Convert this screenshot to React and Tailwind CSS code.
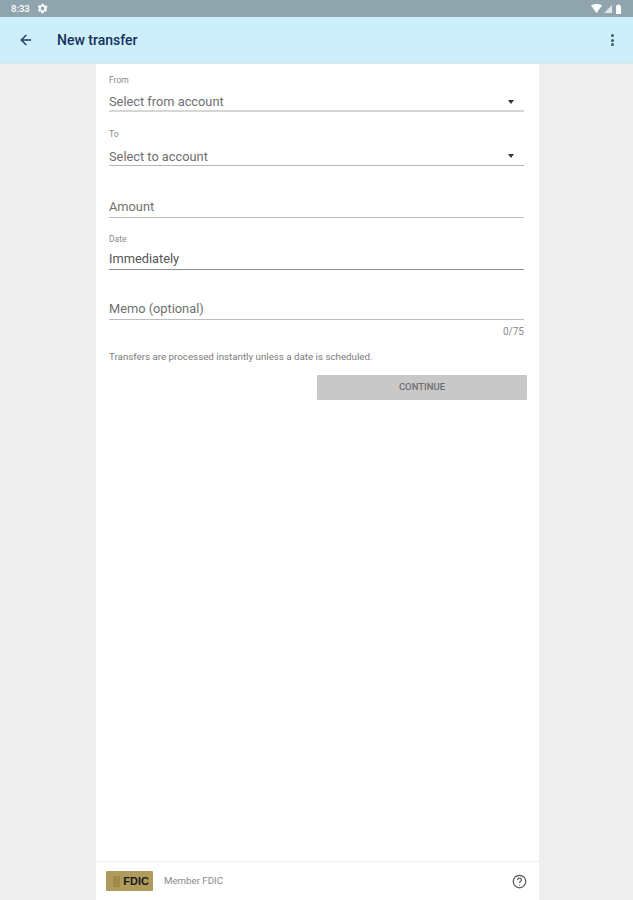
import { ArrowLeft } from 'lucide-react';

const font = { fontFamily: 'Roboto, sans-serif' };

function StatusBar() {
    return (
        <div className="flex h-[17px] items-center justify-between bg-[#90a4ae] pl-[11px] pr-[10px]">
            <div className="flex items-center gap-[6px]">
                <span className="text-[9.500px] leading-none font-medium text-white">8:33</span>
                <svg width="13" height="13" viewBox="0 0 24 24" fill="#fff">
                    <path d="M19.400 13a7.600 7.600 0 0 0 0-2l2.100-1.600-2-3.500-2.500 1a7.500 7.500 0 0 0-1.700-1L14 3.300h-4l-.4 2.600a7.500 7.500 0 0 0-1.700 1l-2.500-1-2 3.500L5.500 11a7.600 7.600 0 0 0 0 2l-2.100 1.600 2 3.500 2.500-1a7.500 7.500 0 0 0 1.700 1l.4 2.600h4l.4-2.600a7.500 7.500 0 0 0 1.700-1l2.500 1 2-3.500zM12 15.500a3.500 3.500 0 1 1 0-7 3.500 3.500 0 0 1 0 7z" />
                </svg>
            </div>
            <div className="flex items-center gap-[2px]">
                <svg width="11" height="9" viewBox="0 0 11 9" fill="#fff"><path d="M0 1.500C3 -.5 8 -.5 11 1.500L5.500 9z" /></svg>
                <svg width="8" height="8" viewBox="0 0 8 8" fill="#fff" fillOpacity="0.7"><path d="M8 0v8H0z" /></svg>
                <svg width="9" height="10" viewBox="0 0 9 10" fill="#fff"><path d="M2 1.500h1.500V.5h2v1H7V10H2z" /></svg>
            </div>
        </div>
    );
}

function Toolbar() {
    return (
        <div className="flex h-[47px] items-center border-b border-[#dde3e6] bg-[#cdeffb] pl-[18px] pr-[19px]">
            <ArrowLeft size={16} strokeWidth={2} className="text-[#1d3a5c]" />
            <h1 className="ml-[23px] text-[14px] font-medium text-[#16305c]">New transfer</h1>
            <div className="ml-auto flex flex-col gap-[1.500px]">
                <span className="h-[3px] w-[3px] rounded-full bg-[#3d5566]" />
                <span className="h-[3px] w-[3px] rounded-full bg-[#3d5566]" />
                <span className="h-[3px] w-[3px] rounded-full bg-[#3d5566]" />
            </div>
        </div>
    );
}

function Caret() {
    return <span className="-mt-[2px] mr-[10px] h-0 w-0 border-x-[3.500px] border-t-[4px] border-x-transparent border-t-[#333]" />;
}

function SelectField({ label, value, line, className }) {
    return (
        <div className={className}>
            <p className="h-[12px] text-[8.500px] leading-[12px] text-[#8a8a8a]">{label}</p>
            <div className={`mt-[7px] flex h-[19px] items-center justify-between pt-[2px] ${line}`}>
                <span className="text-[12.800px] leading-none text-[#6f6f6f]">{value}</span>
                <Caret />
            </div>
        </div>
    );
}

function TextField({ value, className, line = 'border-[#bdbdbd]', color = 'text-[#6f6f6f]' }) {
    return (
        <div className={`flex h-[20px] items-center border-b ${line} ${className}`}>
            <span className={`text-[12.800px] leading-none ${color}`}>{value}</span>
        </div>
    );
}

export default function App() {
    return (
        <div className="flex h-[900px] flex-col bg-[#eeeeee]" style={font}>
            <StatusBar />
            <Toolbar />
            <main className="ml-[96px] flex w-[443px] flex-1 flex-col bg-white">
                <div className="flex-1 pl-[13px] pr-[15px] pt-[10px]">
                    <SelectField label="From" value="Select from account" line="border-b-2 border-[#d6d6d6]" />
                    <SelectField className="mt-[16px]" label="To" value="Select to account" line="border-b border-[#b5b5b5]" />
                    <TextField className="mt-[32px]" value="Amount" />
                    <p className="mt-[15px] h-[12px] text-[8.500px] leading-[12px] text-[#8a8a8a]">Date</p>
                    <TextField className="mt-[5px]" value="Immediately" line="border-[#8c8c8c]" color="text-[#555]" />
                    <TextField className="mt-[30px]" value="Memo (optional)" />
                    <p className="mt-[6px] text-right text-[10px] leading-[12px] text-[#8a8a8a]">0/75</p>
                    <p className="mt-[13px] text-[9.750px] leading-[12px] text-[#7a7a7a]">Transfers are processed instantly unless a date is scheduled.</p>
                    <div className="mt-[12px] flex justify-end">
                        <button className="-mr-[3px] h-[25px] w-[210px] rounded-[1px] bg-[#c8c8c8] text-[9.500px] font-medium text-[#6e6e6e]">CONTINUE</button>
                    </div>
                </div>
                <footer className="flex h-[39px] items-center border-t border-[#eeeeee] pl-[10px] pr-[12px]">
                    <div className="flex h-[20px] w-[47px] items-center justify-between rounded-[1px] bg-[#b09a5c] pl-[7px] pr-[4px]">
                        <span className="h-[11px] w-[7px] bg-[#a08a4c]" />
                        <span className="text-[11px] font-bold leading-none text-[#1a1a1a]" style={{ fontFamily: '"Liberation Sans", sans-serif' }}>FDIC</span>
                    </div>
                    <span className="ml-[11px] text-[9.700px] text-[#8a8a8a]">Member FDIC</span>
                    <svg className="ml-auto" width="15" height="15" viewBox="0 0 24 24" fill="none" stroke="#555" strokeWidth="2">
                        <circle cx="12" cy="12" r="10" />
                        <path d="M9 9.500a3 3 0 1 1 4.500 2.600c-1 .6-1.500 1.200-1.500 2.400" />
                        <path d="M12 17v1.500" />
                    </svg>
                </footer>
            </main>
        </div>
    );
}
